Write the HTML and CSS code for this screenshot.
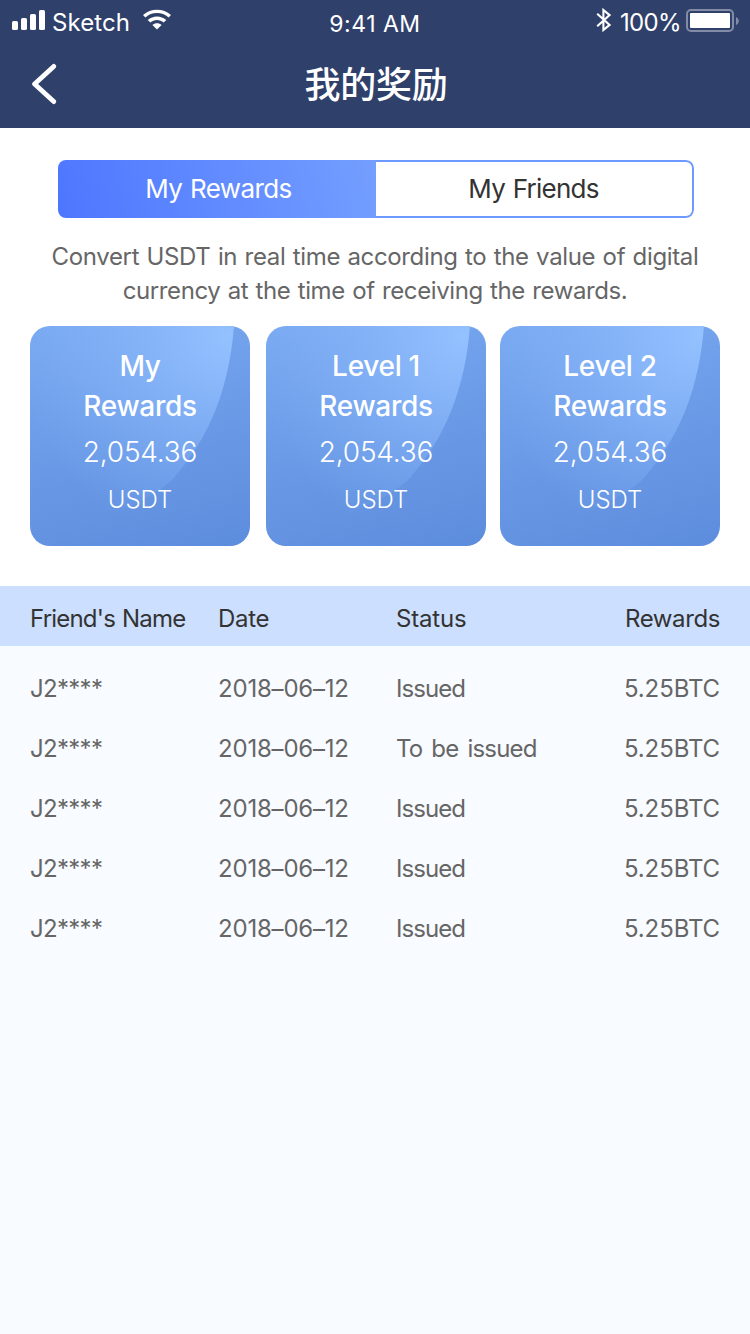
FILE: index.html
```html
<!DOCTYPE html>
<html lang="en">
<head>
<meta charset="utf-8">
<title>我的奖励</title>
<link rel="stylesheet" href="styles.css">
</head>
<body>
<header class="header">
  <div class="status">
    <div class="status-left">
      <svg class="signal" width="34" height="20" viewBox="0 0 34 20" fill="#fff"><rect x="0" y="11" width="6" height="9" rx="1.6"/><rect x="9" y="8" width="6" height="12" rx="1.6"/><rect x="18" y="4" width="6" height="16" rx="1.6"/><rect x="27" y="0" width="6" height="20" rx="1.6"/></svg>
      <span class="carrier">Sketch</span>
      <svg class="wifi" width="30" height="22" viewBox="0 0 30 22" fill="#fff"><path d="M1 6.900C8.700-.1 21.300-.1 29 6.900L26.600 9.500C20.200 3.600 9.800 3.600 3.400 9.500Z"/><path d="M5.700 12C10.900 7.200 19.100 7.200 24.300 12L21.700 14.600C18 11.200 12 11.200 8.300 14.600Z"/><path d="M10.400 17C13 14.600 17 14.600 19.600 17L15 21.600Z"/></svg>
    </div>
    <span class="time">9:41 AM</span>
    <div class="status-right">
      <svg class="bluetooth" width="16" height="24" viewBox="0 0 16 24" fill="none" stroke="#fff" stroke-width="2.100"><path d="M1.200 5.700l12.400 11.200-6.200 5.100V2l6.200 5.100-12.400 11.200"/></svg>
      <span class="percent">100%</span>
      <svg class="battery" width="54" height="24" viewBox="0 0 54 24"><rect x="1" y="1" width="46" height="21" rx="4" fill="none" stroke="#fff" stroke-opacity=".4" stroke-width="2"/><rect x="4" y="4" width="40" height="15" rx="1" fill="#fff"/><path d="M50 8c3.700 1.500 3.700 6.500 0 8z" fill="#fff" fill-opacity=".4"/></svg>
    </div>
  </div>
  <div class="navbar">
    <svg class="back" width="26" height="42" viewBox="0 0 26 42" fill="none" stroke="#fff" stroke-width="4.800" stroke-linecap="round" stroke-linejoin="round"><path d="M22.700 3.400L3.600 21l19.100 17.600"/></svg>
    <h1 class="title">我的奖励</h1>
  </div>
</header>
<main>
  <section class="summary">
    <div class="tabs">
      <div class="tab tab-active">My Rewards</div>
      <div class="tab">My Friends</div>
    </div>
    <p class="note"><span class="note-first">Convert USDT in real time according to the value of digital</span><br><span class="note-second">currency at the time of receiving the rewards.</span></p>
    <div class="cards">
      <div class="card"><svg class="shine" viewBox="0 0 220 220"><defs><radialGradient id="shine" gradientUnits="userSpaceOnUse" cx="200" cy="10" r="215"><stop offset="0" stop-color="#94c1ff"/><stop offset=".5" stop-color="#8fbdff" stop-opacity=".48"/><stop offset="1" stop-color="#8ab8fc" stop-opacity="0"/></radialGradient></defs><path d="M0 0H204C199 62 180 112 141 155Q95 194 0 206Z" fill="url(#shine)"/></svg><h2 class="card-title">My<br>Rewards</h2><div class="amount">2,054.36</div><div class="unit">USDT</div></div>
      <div class="card"><svg class="shine" viewBox="0 0 220 220"><path d="M0 0H204C199 62 180 112 141 155Q95 194 0 206Z" fill="url(#shine)"/></svg><h2 class="card-title">Level 1<br>Rewards</h2><div class="amount">2,054.36</div><div class="unit">USDT</div></div>
      <div class="card"><svg class="shine" viewBox="0 0 220 220"><path d="M0 0H204C199 62 180 112 141 155Q95 194 0 206Z" fill="url(#shine)"/></svg><h2 class="card-title">Level 2<br>Rewards</h2><div class="amount">2,054.36</div><div class="unit">USDT</div></div>
    </div>
  </section>
  <section class="history">
    <div class="row row-head"><span class="h-name">Friend's Name</span><span>Date</span><span class="h-status">Status</span><span class="h-reward">Rewards</span></div>
    <div class="rows">
      <div class="row"><span class="name">J2****</span><span class="date">2018–06–12</span><span class="issued">Issued</span><span class="reward">5.25BTC</span></div>
      <div class="row"><span class="name">J2****</span><span class="date">2018–06–12</span><span class="pending">To be issued</span><span class="reward">5.25BTC</span></div>
      <div class="row"><span class="name">J2****</span><span class="date">2018–06–12</span><span class="issued">Issued</span><span class="reward">5.25BTC</span></div>
      <div class="row"><span class="name">J2****</span><span class="date">2018–06–12</span><span class="issued">Issued</span><span class="reward">5.25BTC</span></div>
      <div class="row"><span class="name">J2****</span><span class="date">2018–06–12</span><span class="issued">Issued</span><span class="reward">5.25BTC</span></div>
    </div>
  </section>
</main>
</body>
</html>
```
FILE: styles.css
```css
* { box-sizing: border-box; }
body {
  margin: 0;
  width: 750px;
  height: 1334px;
  display: flex;
  flex-direction: column;
  font-family: Inter, "Noto Sans CJK SC", sans-serif;
  font-weight: 400;
  background: #f8fbff;
  color: #666;
}
.header { height: 128px; background: #2f406b; color: #fff; }
.status {
  height: 40px;
  display: grid;
  grid-template-columns: 1fr auto 1fr;
  font-size: 24px;
  line-height: 46px;
}
.status-left, .status-right { display: flex; align-items: flex-start; }
.status-left { padding-left: 12px; }
.status-right { justify-content: flex-end; padding-right: 10px; }
.signal { margin-top: 10px; }
.carrier { margin-left: 6px; width: 80px; letter-spacing: .1px; }
.wifi { margin: 8px 0 0 10px; }
.time { font-size: 23px; line-height: 48px; letter-spacing: .5px; }
.bluetooth { margin-top: 8px; }
.percent { margin-left: 8px; width: 61px; white-space: nowrap; letter-spacing: -.7px; }
.battery { margin: 9px 0 0 5px; }
.navbar {
  height: 88px;
  display: grid;
  grid-template-columns: 1fr auto 1fr;
  padding: 0 31px;
}
.back { margin-top: 23px; }
.title { margin: 0 -1px 0 1px; font-size: 36px; line-height: 84px; font-weight: 500; letter-spacing: -.2px; font-family: "Noto Sans CJK SC", sans-serif; }
.summary { height: 458px; padding: 32px 30px 0; background: #fff; }
.tabs {
  height: 58px;
  width: 636px;
  margin-left: 28px;
  display: grid;
  grid-template-columns: 318px 1fr;
  border-radius: 8px;
  overflow: hidden;
  color: #333;
  font-size: 26px;
  text-align: center;
}
.tab { border: 2px solid #6e99ff; border-left: 0; border-radius: 0 8px 8px 0; line-height: 54px; letter-spacing: -.75px; word-spacing: 1px; padding-right: 1px; }
.tab-active { border: 0; border-radius: 0; line-height: 58px; color: #fff; background: linear-gradient(75deg, #4d76ff, #749fff); padding: 0 0 0 3px; letter-spacing: -.6px; }
.note { margin: 22px -10px 0; font-size: 24px; line-height: 34px; text-align: center; white-space: nowrap; word-spacing: 1px; }
.note-first { letter-spacing: -.35px; }
.note-second { letter-spacing: -.4px; }
.cards { margin-top: 18px; display: flex; gap: 16px; }
.card {
  position: relative;
  width: 220px;
  height: 220px;
  padding-top: 20px;
  border-radius: 20px;
  overflow: hidden;
  color: #fff;
  text-align: center;
  background: linear-gradient(165deg, #79a9f1, #5c8cdc);
}
.card:last-child { margin-left: -2px; }
.shine { position: absolute; inset: 0; width: 220px; height: 220px; }
.card-title, .amount, .unit { position: relative; }
.card-title { margin: 0; font-size: 28px; line-height: 40px; font-weight: 500; letter-spacing: -.3px; }
.amount { margin-top: 6px; font-size: 28px; line-height: 40px; font-weight: 300; letter-spacing: -.2px; }
.unit { margin-top: 11px; font-size: 24px; line-height: 33px; font-weight: 300; }
.row {
  height: 60px;
  padding: 0 30px;
  display: grid;
  grid-template-columns: 188px 178px 1fr auto;
  font-size: 24px;
  line-height: 62px;
  letter-spacing: -.3px;
  white-space: nowrap;
}
.row-head { background: #ccdfff; color: #333; line-height: 65px; }
.rows { padding-top: 12px; }
.h-name { letter-spacing: -.8px; word-spacing: 1px; }
.h-status { letter-spacing: -.2px; }
.h-reward { letter-spacing: -.4px; }
.name { letter-spacing: -.7px; }
.date { letter-spacing: -.2px; }
.issued { letter-spacing: -.95px; }
.pending { letter-spacing: -.8px; word-spacing: 3px; }
.reward { letter-spacing: -.1px; }
```
